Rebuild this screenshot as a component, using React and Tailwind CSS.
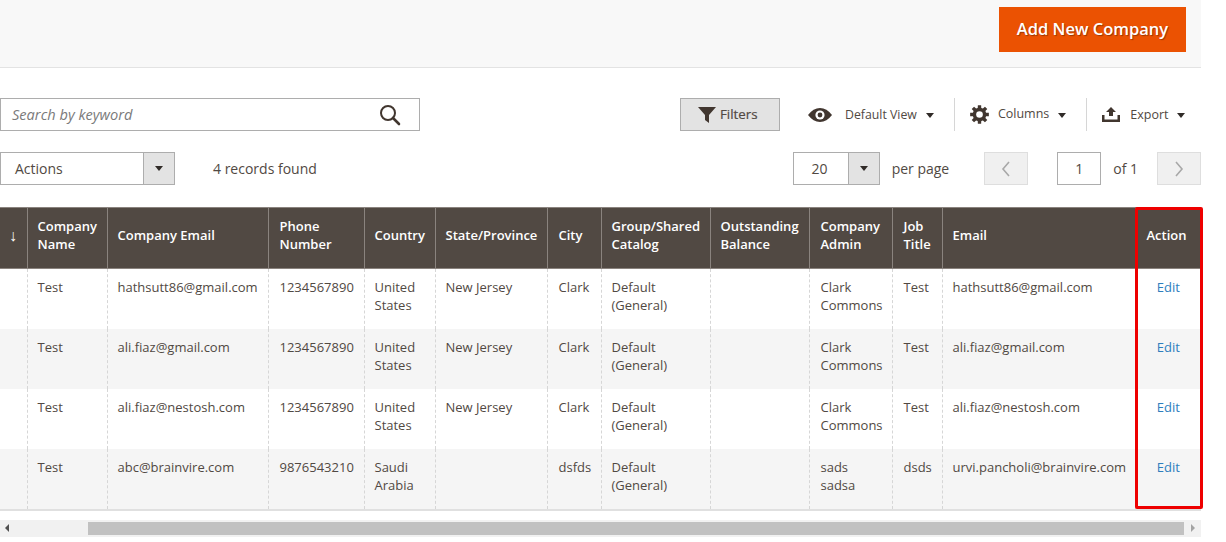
const rows = [
  { email: 'hathsutt86@gmail.com', phone: '1234567890', country: ['United', 'States'], state: 'New Jersey', city: 'Clark', admin: ['Clark', 'Commons'], job: 'Test', adminEmail: 'hathsutt86@gmail.com' },
  { email: 'ali.fiaz@gmail.com', phone: '1234567890', country: ['United', 'States'], state: 'New Jersey', city: 'Clark', admin: ['Clark', 'Commons'], job: 'Test', adminEmail: 'ali.fiaz@gmail.com' },
  { email: 'ali.fiaz@nestosh.com', phone: '1234567890', country: ['United', 'States'], state: 'New Jersey', city: 'Clark', admin: ['Clark', 'Commons'], job: 'Test', adminEmail: 'ali.fiaz@nestosh.com' },
  { email: 'abc@brainvire.com', phone: '9876543210', country: ['Saudi', 'Arabia'], state: '', city: 'dsfds', admin: ['sads', 'sadsa'], job: 'dsds', adminEmail: 'urvi.pancholi@brainvire.com' },
];

const columns = [
  { label: ['↓'], width: 'w-[27px]', pad: 'px-[9px] text-[16px] font-normal' },
  { label: ['Company', 'Name'], width: 'w-[80px]', pad: 'px-[10px]' },
  { label: ['Company Email'], width: 'w-[161px]', pad: 'px-[10px]' },
  { label: ['Phone', 'Number'], width: 'w-[96px]', pad: 'pl-[11px] pr-[9px]' },
  { label: ['Country'], width: 'w-[71px]', pad: 'px-[10px]' },
  { label: ['State/Province'], width: 'w-[112px]', pad: 'px-[10px]' },
  { label: ['City'], width: 'w-[54px]', pad: 'pl-[11px] pr-[9px]' },
  { label: ['Group/Shared', 'Catalog'], width: 'w-[109px]', pad: 'px-[10px]' },
  { label: ['Outstanding', 'Balance'], width: 'w-[99px]', pad: 'px-[10px]' },
  { label: ['Company', 'Admin'], width: 'w-[83px]', pad: 'pl-[11px] pr-[9px]' },
  { label: ['Job', 'Title'], width: 'w-[50px]', pad: 'pl-[11px] pr-[9px]' },
  { label: ['Email'], width: 'w-[193px]', pad: 'px-[10px]' },
  { label: ['Action'], width: 'w-[66px]', pad: 'pl-[11px] pr-[9px]' },
];

// 8 tooth gear outline, centre 12,12
const polar = (r, deg) => {
  const a = (deg * Math.PI) / 180;
  return `${(12 + r * Math.cos(a)).toFixed(2)} ${(12 + r * Math.sin(a)).toFixed(2)}`;
};
const gearOutline = Array.from({ length: 8 }, (_, i) => {
  const c = i * 45 - 90;
  return `${polar(8.6, c - 15)} ${polar(12, c - 10)} ${polar(12, c + 10)} ${polar(8.6, c + 15)}`;
}).join(' ');

function Caret({ className = '' }) {
  return <span className={`inline-block w-0 h-0 border-x-[4.5px] border-x-transparent border-t-[5px] border-t-[#302b28] ${className}`} />;
}

function Lines({ items }) {
  return items.map((t) => <div key={t}>{t}</div>);
}

function Cell({ children, col, className = '' }) {
  return (
    <td className={`align-top pt-[9px] leading-[18px] border-l border-dashed border-[#d6d6d6] first:border-l-0 ${columns[col].pad} ${className}`}>
      {children}
    </td>
  );
}

function SelectBox({ label, boxWidth, textClass }) {
  return (
    <div className={`flex h-[33px] border border-[#adadad] bg-white ${boxWidth}`}>
      <div className={`flex-1 flex items-center ${textClass}`}>{label}</div>
      <div className="w-[31px] flex items-center justify-center bg-[#e3e3e3] border-l border-[#adadad]">
        <Caret />
      </div>
    </div>
  );
}

function SearchIcon() {
  return (
    <svg width="22" height="22" viewBox="0 0 22 22" fill="none" stroke="#41362f">
      <circle cx="9" cy="9" r="7" strokeWidth="2" />
      <path d="M14 14l6 6" strokeWidth="2.6" strokeLinecap="round" />
    </svg>
  );
}

function EyeIcon() {
  return (
    <svg width="24" height="14" viewBox="0 0 24 14">
      <path d="M0 7C3.5 2.4 7.5 0 12 0s8.5 2.4 12 7c-3.5 4.6-7.5 7-12 7S3.500 11.600 0 7z" fill="#41362f" />
      <circle cx="12" cy="7" r="4.6" fill="#fff" />
      <circle cx="12" cy="7" r="2.4" fill="#41362f" />
    </svg>
  );
}

function GearIcon() {
  return (
    <svg width="19" height="19" viewBox="0 0 24 24">
      <polygon points={gearOutline} fill="#41362f" />
      <circle cx="12" cy="12" r="4.2" fill="#fff" />
    </svg>
  );
}

function ExportIcon() {
  return (
    <svg width="18" height="15" viewBox="0 0 18 15" fill="#41362f">
      <path d="M9 0l5 5h-3v4H7V5H4z" />
      <path d="M0 8h2.500v4.500h13V8H18v7H0z" />
    </svg>
  );
}

function Chevron({ d }) {
  return (
    <svg width="10" height="16" viewBox="0 0 10 16" fill="none" stroke="#a8a8a8" strokeWidth="1.6">
      <path d={d} />
    </svg>
  );
}

export default function App() {
  return (
    <div className="relative w-[1226px] h-[542px] overflow-hidden bg-white text-[14px] text-[#514943] font-['Open_Sans',sans-serif]">
      {/* Header */}
      <div className="w-[1201px] h-[68px] bg-[#f8f8f8] border-b border-[#e3e3e3] flex justify-end pt-[7px] pr-[15px]">
        <button className="w-[187px] h-[45px] pb-[1px] bg-[#eb5202] text-white text-[16.5px] font-semibold [text-shadow:1px_1px_1px_rgba(0,0,0,0.35)]">
          Add New Company
        </button>
      </div>

      <div className="w-[1201px]">
        {/* Search + filters */}
        <div className="flex items-center h-[33px] mt-[30px]">
          <div className="w-[420px] h-[33px] border border-[#adadad] flex items-center pl-[11px] pr-[18px]">
            <span className="flex-1 italic text-[#7a7a7a] text-[14.6px]">Search by keyword</span>
            <SearchIcon />
          </div>
          <button className="ml-[260px] w-[100px] h-[33px] bg-[#e3e3e3] border border-[#adadad] flex items-center pl-[17px] gap-[4px] text-[13.3px] text-[#514943] [-webkit-text-stroke:0.2px_#514943]">
            <svg width="18" height="16" viewBox="0 0 18 16"><path d="M0 0h18L11 8v8l-4-3V8z" fill="#41362f" /></svg>
            Filters
          </button>
          <div className="ml-[28px] flex items-center text-[12.3px] text-[#514943]">
            <EyeIcon />
            <span className="ml-[13px] mt-[2px]">Default View</span>
            <Caret className="ml-[9px] mt-[2px]" />
          </div>
          <div className="ml-[20px] w-px h-[33px] bg-[#d6d6d6]" />
          <div className="ml-[15px] flex items-center text-[12.5px] text-[#514943]">
            <GearIcon />
            <span className="ml-[9px]">Columns</span>
            <Caret className="ml-[9px] mt-[2px]" />
          </div>
          <div className="ml-[20px] w-px h-[33px] bg-[#d6d6d6]" />
          <div className="ml-[15px] flex items-center text-[12.5px] text-[#514943]">
            <ExportIcon />
            <span className="ml-[10px] mt-[2px]">Export</span>
            <Caret className="ml-[8px] mt-[2px]" />
          </div>
        </div>

        {/* Actions + pager */}
        <div className="flex items-center h-[33px] mt-[21px]">
          <SelectBox label="Actions" boxWidth="w-[175px]" textClass="pl-[14px]" />
          <span className="ml-[38px]">4 records found</span>
          <div className="ml-auto flex items-center">
            <SelectBox label="20" boxWidth="w-[87px]" textClass="justify-center pr-[2px]" />
            <span className="ml-[12px]">per page</span>
            <button className="ml-[35px] w-[44px] h-[33px] bg-[#f0f0f0] border border-[#dedede] flex items-center justify-center">
              <Chevron d="M8 1L2 8l6 7" />
            </button>
            <div className="ml-[29px] w-[44px] h-[33px] border border-[#adadad] flex items-center justify-center">1</div>
            <span className="ml-[12px]">of 1</span>
            <button className="ml-[19px] w-[44px] h-[33px] bg-[#f0f0f0] border border-[#dedede] flex items-center justify-center">
              <Chevron d="M2 1l6 7-6 7" />
            </button>
          </div>
        </div>

        {/* Table */}
        <table className="mt-[22px] w-[1201px] table-fixed border-collapse text-[13px]">
          <colgroup>
            {columns.map((c, i) => <col key={i} className={c.width} />)}
          </colgroup>
          <thead>
            <tr className="h-[61px] bg-[#514943] text-white border-y border-[#8a837e]">
              {columns.map((c, i) => (
                <th key={i} className={`pb-[6px] text-left font-semibold leading-[18px] border-l border-[#8a837e] first:border-l-0 ${c.pad}`}>
                  <Lines items={c.label} />
                </th>
              ))}
            </tr>
          </thead>
          <tbody>
            {rows.map((r, i) => (
              <tr key={i} className={`h-[60px] ${i % 2 ? 'bg-[#f5f5f5]' : 'bg-white'}`}>
                <Cell col={1} />
                <Cell col={1}>Test</Cell>
                <Cell col={2}>{r.email}</Cell>
                <Cell col={3}>{r.phone}</Cell>
                <Cell col={4}><Lines items={r.country} /></Cell>
                <Cell col={5}>{r.state}</Cell>
                <Cell col={6}>{r.city}</Cell>
                <Cell col={7}><Lines items={['Default', '(General)']} /></Cell>
                <Cell col={8} />
                <Cell col={9}><Lines items={r.admin} /></Cell>
                <Cell col={10}>{r.job}</Cell>
                <Cell col={11}>{r.adminEmail}</Cell>
                <Cell col={11} className="text-center text-[#2e7ebd]">Edit</Cell>
              </tr>
            ))}
          </tbody>
        </table>
        <div className="h-[2px] bg-[#e0e0e0]" />

        {/* Scrollbar */}
        <div className="mt-[9px] h-[17px] bg-[#f1f1f1] flex items-center">
          <span className="ml-[5px] w-0 h-0 border-y-[4px] border-y-transparent border-r-[4px] border-r-[#505050]" />
          <div className="ml-[79px] w-[1096px] h-[13px] bg-[#c1c1c1]" />
          <span className="ml-[7px] w-0 h-0 border-y-[4px] border-y-transparent border-l-[4px] border-l-[#a3a3a3]" />
        </div>
      </div>

      {/* Red highlight drawn over the Action column */}
      <div className="absolute left-[1135px] top-[207px] w-[68px] h-[302px] border-[3px] border-[#ee0000] rounded-[2px]" />
    </div>
  );
}
